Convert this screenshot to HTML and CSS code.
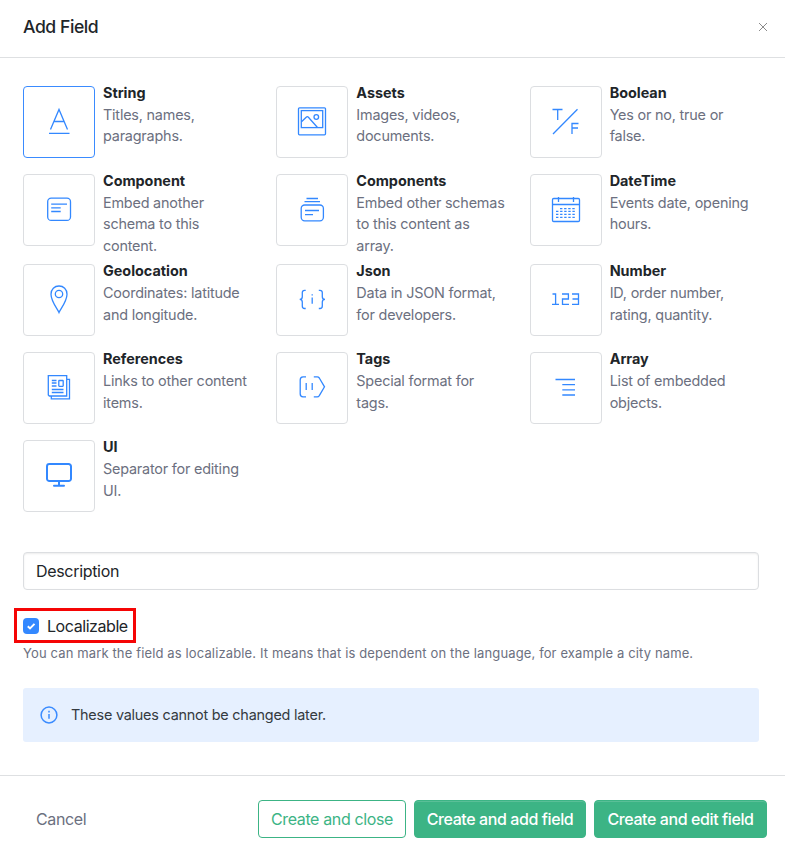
FILE: index.html
```html
<!DOCTYPE html>
<html lang="en">
<head>
<meta charset="utf-8">
<title>Add Field</title>
<link rel="stylesheet" href="styles.css">
</head>
<body>
<div class="modal">
  <header class="modal-header">
    <h1 class="modal-title">Add Field</h1>
    <button class="close" aria-label="Close"><svg width="10" height="10" viewBox="0 0 10 10"><path d="M1 1l8 8M9 1l-8 8"/></svg></button>
  </header>
  <main class="modal-body">
    <div class="types">
      <div class="type">
        <div class="tile selected"><svg viewBox="0 0 72 72"><path d="M27.5 43.5L36 23.5L44.5 43.5M30.8 35.5H41.2M26 47.4H46.5"/></svg></div>
        <div class="info"><h2>String</h2><p>Titles, names, paragraphs.</p></div>
      </div>
      <div class="type">
        <div class="tile"><svg viewBox="0 0 72 72"><rect x="22.5" y="21.8" width="27" height="27" rx="1"/><rect x="25.3" y="24.6" width="21.4" height="17"/><circle cx="40.3" cy="31" r="2.3"/><path d="M25.5 35.8L30.2 31.2C31 30.5 31.7 30.5 32.4 31.2L41.3 41.2"/></svg></div>
        <div class="info"><h2>Assets</h2><p>Images, videos, documents.</p></div>
      </div>
      <div class="type">
        <div class="tile"><svg viewBox="0 0 72 72"><path d="M22.5 23.5H32.5M27.7 23.5V34M47.5 23.2L23 48M42 48V37.5H48.5M42 42H48"/></svg></div>
        <div class="info"><h2>Boolean</h2><p>Yes or no, true or false.</p></div>
      </div>
      <div class="type">
        <div class="tile"><svg viewBox="0 0 72 72"><rect x="24.7" y="24.2" width="22.8" height="22.2" rx="3.5"/><path d="M28.2 30.2H44M28.2 33.8H37.7M28.2 37.5H37.7"/></svg></div>
        <div class="info"><h2>Component</h2><p>Embed another schema to this content.</p></div>
      </div>
      <div class="type">
        <div class="tile"><svg viewBox="0 0 72 72"><rect x="25.2" y="31" width="22.2" height="15.8" rx="3.5"/><path d="M29 36.5H43M29 40.7H37M30.5 24.5H42M28.5 27.7H44"/></svg></div>
        <div class="info"><h2>Components</h2><p>Embed other schemas to this content as array.</p></div>
      </div>
      <div class="type">
        <div class="tile"><svg viewBox="0 0 72 72"><rect x="22.5" y="24.5" width="27" height="23" rx="1.2"/><path d="M22.5 30.5H49.5M28.5 23V28M43.5 23V28"/><path d="M30 34.6H46M26 37.4H46M26 40.3H46M26 43.4H46" stroke-dasharray="2.4 1.7" stroke-width="1.3"/></svg></div>
        <div class="info"><h2>DateTime</h2><p>Events date, opening hours.</p></div>
      </div>
      <div class="type lower">
        <div class="tile"><svg viewBox="0 0 72 72"><path d="M36 48.5C34.5 45 28 37.2 28 30.2C28 25.2 31.5 22 36 22S44 25.2 44 30.2C44 37.2 37.5 45 36 48.5Z"/><circle cx="36" cy="30" r="3.7"/></svg></div>
        <div class="info"><h2>Geolocation</h2><p>Coordinates: latitude and longitude.</p></div>
      </div>
      <div class="type lower">
        <div class="tile"><svg viewBox="0 0 72 72"><path d="M29.7 26.3H28.5C26.8 26.3 26.3 27.2 26.3 28.6V32.7C26.3 34.3 25.5 35.3 23.7 35.3C25.5 35.3 26.3 36.3 26.3 38V42C26.3 43.5 26.8 44.5 28.5 44.5H29.7M42.8 26.3H44C45.7 26.3 46.3 27.2 46.3 28.6V32.7C46.3 34.3 47.2 35.3 49 35.3C47.2 35.3 46.3 36.3 46.3 38V42C46.3 43.5 45.7 44.5 44 44.5H42.8M36.2 33.5V39.8M36.2 30.2V31.6"/></svg></div>
        <div class="info"><h2>Json</h2><p>Data in JSON format, for developers.</p></div>
      </div>
      <div class="type lower">
        <div class="tile"><svg viewBox="0 0 72 72"><path d="M22.5 30H25.6V40.3M22 40.3H29M32 30H38.4V35H32.5V40.3H39M42 30H48.5V40.3H42M42.5 35H48.5"/></svg></div>
        <div class="info"><h2>Number</h2><p>ID, order number, rating, quantity.</p></div>
      </div>
      <div class="type lower">
        <div class="tile"><svg viewBox="0 0 72 72"><path d="M25.3 23.7H43.7V44H26.3L25.3 43ZM44 27.3H46.5V46.8H28.3V44.3M28.8 28.5H33.5M28.8 31H33.5M28.8 34H33.5M28.8 37.5H40.5M28.8 40.5H40.5"/><rect x="35.8" y="28.5" width="4.4" height="5.8" rx=".5"/></svg></div>
        <div class="info"><h2>References</h2><p>Links to other content items.</p></div>
      </div>
      <div class="type lower">
        <div class="tile"><svg viewBox="0 0 72 72"><path d="M30 24.8H27C25 24.8 24.2 26 24.2 28V41.7C24.2 43.7 25 44.8 27 44.8H30M37.8 24.8H41.2C42.2 24.8 42.8 25.3 43.3 26L48.5 34.8L43.3 43.6C42.8 44.4 42.2 44.8 41.2 44.8H37.8M30.2 31V38M36.2 31V38"/></svg></div>
        <div class="info"><h2>Tags</h2><p>Special format for tags.</p></div>
      </div>
      <div class="type lower">
        <div class="tile"><svg viewBox="0 0 72 72"><path d="M25.5 27.5H45M32.3 32.6H45M32.3 37.8H45M32.3 43H45"/></svg></div>
        <div class="info"><h2>Array</h2><p>List of embedded objects.</p></div>
      </div>
      <div class="type lower">
        <div class="tile"><svg viewBox="0 0 72 72"><path d="M26.4 24.1H45.6A2.4 2.4 0 0 1 48 26.5V38.7A2.4 2.4 0 0 1 45.6 41.1H26.4A2.4 2.4 0 0 1 24 38.7V26.5A2.4 2.4 0 0 1 26.4 24.1ZM36 41.5V45.5M31 45.8H41" stroke-width="2" stroke-linecap="round"/></svg></div>
        <div class="info"><h2>UI</h2><p>Separator for editing UI.</p></div>
      </div>
    </div>
    <div class="field">Description</div>
    <div class="highlight">
      <span class="check"><svg width="16" height="16" viewBox="0 0 16 16"><path d="M4.8 8.3L7 10.4L11.5 5.9"/></svg></span>
      <span class="check-label">Localizable</span>
    </div>
    <p class="help">You can mark the field as localizable. It means that is dependent on the language, for example a city name.</p>
    <div class="alert">
      <svg width="18" height="18" viewBox="0 0 18 18"><circle cx="9" cy="9" r="7.9"/><path d="M9 8V12.8M9 4.8V6.4"/></svg>
      <span>These values cannot be changed later.</span>
    </div>
  </main>
  <footer class="modal-footer">
    <button class="btn cancel">Cancel</button>
    <button class="btn outline">Create and close</button>
    <button class="btn solid add">Create and add field</button>
    <button class="btn solid edit">Create and edit field</button>
  </footer>
</div>
</body>
</html>
```
FILE: styles.css
```css
* { box-sizing: border-box; }
body { margin: 0; background: #fff; color: #212529; font-family: Inter, "Liberation Sans", sans-serif; }
h1, h2, p { margin: 0; }
button { font: inherit; }
.modal { height: 859px; display: flex; flex-direction: column; overflow: hidden; }
.modal-header { height: 58px; padding: 0 17px 4px 23px; border-bottom: 1px solid #dee0e2; display: flex; align-items: center; justify-content: space-between; }
.modal-title { font-size: 17.6px; font-weight: 500; letter-spacing: -.45px; }
.close { border: 0; padding: 0; background: none; width: 10px; height: 10px; display: flex; }
.close svg { stroke: #8b8b8b; stroke-width: 1; fill: none; }
.modal-body { height: 717px; padding: 28px 26px 0 23px; }
.types { display: grid; grid-template-columns: repeat(3, 253.33px); grid-template-rows: 88px 90px 88px 88px 88px; margin-right: -30px; }
.type { display: flex; gap: 8px; }
.tile { width: 72px; height: 72px; flex: none; border: 1px solid #dcdee1; border-radius: 4px; }
.tile.selected { border-color: #3a8bff; }
.tile svg { display: block; width: 72px; height: 72px; margin: -1px; fill: none; stroke: #3388ff; stroke-width: 1.3; }
.info { width: 150px; margin-top: -4px; font-size: 14.4px; line-height: 21.6px; }
.lower .info { margin-top: -3.7px; }
.info h2 { font-size: 14.4px; line-height: 21.6px; font-weight: 700; letter-spacing: -.02px; }
.info p { color: #6c7080; letter-spacing: -.2px; }
.field { margin-top: 24px; height: 38px; border: 1px solid #dcdee1; border-radius: 4px; padding: 0 12px; font-size: 16px; line-height: 36px; letter-spacing: -.32px; box-shadow: inset 0 1px 2px rgba(0,0,0,.08); }
.highlight { margin: 18px 0 0 -9px; width: 122px; height: 35px; border: 3px solid #f50505; display: flex; align-items: center; gap: 8px; padding-left: 6px; white-space: nowrap; }
.check { width: 16px; height: 16px; border-radius: 4px; background: #3388ff; }
.check svg { display: block; fill: none; stroke: #fff; stroke-width: 2; }
.check-label { font-size: 16px; letter-spacing: -.43px; }
.help { height: 20px; font-size: 13px; line-height: 20px; letter-spacing: .135px; color: #6c7080; white-space: nowrap; }
.alert { margin-top: 25px; height: 54px; border-radius: 3px; background: #e6f0ff; display: flex; align-items: center; gap: 13px; padding: 0 0 1px 17px; font-size: 14.4px; letter-spacing: -.22px; color: #343a40; }
.alert svg { fill: none; stroke: #3a8bff; stroke-width: 1.5; }
.modal-footer { height: 84px; border-top: 1px solid #dee0e2; padding: 24px 18px 0 23px; display: flex; gap: 8px; }
.btn { height: 38px; border: 1px solid transparent; border-radius: 4px; padding: 0; font-size: 16px; white-space: nowrap; letter-spacing: -.36px; }
.cancel { background: none; color: #6c7080; padding-left: 12px; margin-right: auto; }
.outline { width: 148px; background: #fff; border-color: #3cb485; color: #3cb485; }
.solid { background: #3cb485; border-color: #3cb485; color: #fff; font-weight: 500; letter-spacing: -.4px; box-shadow: inset 0 1px 0 rgba(255,255,255,.15); }
.add { width: 172px; }
.edit { width: 173px; }
```
